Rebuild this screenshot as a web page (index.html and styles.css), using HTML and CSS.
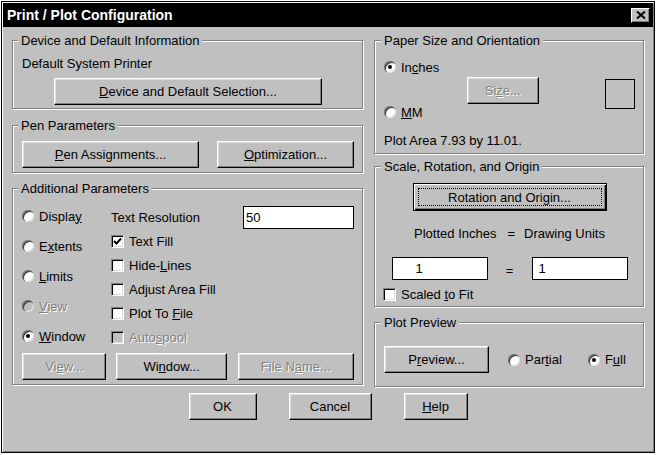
FILE: index.html
```html
<!DOCTYPE html>
<html lang="en">
<head>
  <meta charset="UTF-8">
  <title>Print / Plot Configuration</title>
  <link rel="stylesheet" href="styles.css">
</head>
<body>
  <div class="window">
    <div class="titlebar">
      <span class="title">Print / Plot Configuration</span>
      <span class="close">
        <svg width="10" height="8" viewBox="0 0 10 8"><path d="M1 0.5 L9 7.5 M9 0.5 L1 7.5" stroke="#000" stroke-width="2" fill="none"/></svg>
      </span>
    </div>

    <div class="main">
      <!-- left column -->
      <div class="col col-left">
        <div class="group device">
          <div class="group-title">Device and Default Information</div>
          <div class="printer">Default System Printer</div>
          <button class="btn btn-device"><span><u>D</u>evice and Default Selection...</span></button>
        </div>

        <div class="group pen">
          <div class="group-title">Pen Parameters</div>
          <div class="pen-row">
            <button class="btn btn-pen"><span><u>P</u>en Assignments...</span></button>
            <button class="btn btn-opt"><span><u>O</u>ptimization...</span></button>
          </div>
        </div>

        <div class="group additional">
          <div class="group-title">Additional Parameters</div>
          <div class="mid">
            <div class="radio-col">
              <label class="opt"><span class="radio"></span><span>Displa<u>y</u></span></label>
              <label class="opt"><span class="radio"></span><span>E<u>x</u>tents</span></label>
              <label class="opt"><span class="radio"></span><span><u>L</u>imits</span></label>
              <label class="opt disabled"><span class="radio off"></span><span><u>V</u>iew</span></label>
              <label class="opt"><span class="radio checked"></span><span><u>W</u>indow</span></label>
            </div>
            <div class="opt-col">
              <div class="res-row">
                <span class="res-label">Text Resolution</span>
                <span class="field field-res">50</span>
              </div>
              <label class="check-row"><span class="check"><svg width="9" height="9" viewBox="0 0 9 9"><path d="M1 4 L3.5 6.5 L8 1.5" stroke="#000" stroke-width="2" fill="none"/></svg></span><span>Text Fill</span></label>
              <label class="check-row"><span class="check"></span><span>Hide-<u>L</u>ines</span></label>
              <label class="check-row"><span class="check"></span><span>Ad<u>j</u>ust Area Fill</span></label>
              <label class="check-row"><span class="check"></span><span>Plot To <u>F</u>ile</span></label>
              <label class="check-row disabled"><span class="check off"></span><span>Auto<u>s</u>pool</span></label>
            </div>
          </div>
          <div class="btn-row">
            <button class="btn btn-view disabled"><span>Vi<u>e</u>w...</span></button>
            <button class="btn btn-window"><span>Wi<u>n</u>dow...</span></button>
            <button class="btn btn-file disabled"><span>File N<u>a</u>me...</span></button>
          </div>
        </div>
      </div>

      <!-- right column -->
      <div class="col col-right">
        <div class="group paper">
          <div class="group-title">Paper Size and Orientation</div>
          <div class="paper-row">
            <div class="paper-radios">
              <label class="opt"><span class="radio checked"></span><span>In<u>c</u>hes</span></label>
              <label class="opt"><span class="radio"></span><span><u>M</u>M</span></label>
            </div>
            <button class="btn btn-size disabled"><span>Si<u>z</u>e...</span></button>
            <span class="paper-square"></span>
          </div>
          <div class="plot-area">Plot Area 7.93 by 11.01.</div>
        </div>

        <div class="group scale">
          <div class="group-title">Scale, Rotation, and Origin</div>
          <button class="btn btn-default btn-rotation"><span>Rotation and Ori<u>g</u>in...</span></button>
          <div class="units-row">
            <span>Plotted Inches</span>
            <span class="units-eq">=</span>
            <span>Drawing Units</span>
          </div>
          <div class="fields-row">
            <span class="field field-scale field-plotted">1</span>
            <span class="eq">=</span>
            <span class="field field-scale">1</span>
          </div>
          <label class="check-row fit-row"><span class="check"></span><span>Scaled <u>t</u>o Fit</span></label>
        </div>

        <div class="group preview">
          <div class="group-title">Plot Preview</div>
          <div class="preview-row">
            <button class="btn btn-preview"><span>P<u>r</u>eview...</span></button>
            <label class="opt opt-partial"><span class="radio"></span><span>Par<u>t</u>ial</span></label>
            <label class="opt opt-full"><span class="radio checked"></span><span>F<u>u</u>ll</span></label>
          </div>
        </div>
      </div>
    </div>

    <div class="footer">
      <button class="btn btn-ok">OK</button>
      <button class="btn btn-cancel">Cancel</button>
      <button class="btn btn-help"><span><u>H</u>elp</span></button>
    </div>
  </div>
</body>
</html>
```

FILE: styles.css
```css
* {
  box-sizing: border-box;
}
body {
  margin: 0;
  background: #fff;
  font-family: "Liberation Sans", Arial, sans-serif;
  font-size: 13px;
  line-height: 15px;
  color: #000;
}
.window {
  width: 654px;
  height: 452px;
  margin: 1px 0 0 1px;
  padding: 1px;
  border: 1px solid #000;
  background: #c0c0c0;
  box-shadow: inset 1px 1px 0 #fff, inset -1px -1px 0 #808080;
}
.titlebar {
  height: 24px;
  background: #000;
  display: flex;
  align-items: center;
  justify-content: space-between;
  padding: 0 3px 0 4px;
}
.title {
  color: #fff;
  font-weight: bold;
  font-size: 14px;
}
.close {
  width: 19px;
  height: 15px;
  display: flex;
  align-items: center;
  justify-content: center;
  background: #c0c0c0;
  border: 1px solid;
  border-color: #fff #000 #000 #fff;
  box-shadow: inset -1px -1px 0 #808080;
}

/* layout */
.main {
  display: flex;
  gap: 11px;
  padding: 13px 0 0 9px;
}
.col-left {
  width: 351px;
}
.col-right {
  width: 270px;
}
.group {
  border: 1px solid #808080;
  box-shadow: 1px 1px 0 #fff, inset 1px 1px 0 #fff;
  padding: 0 8px 3px 8px;
}
.group-title {
  width: fit-content;
  margin: -8px 0 0 -3px;
  padding: 0 3px;
  background: #c0c0c0;
}

/* buttons */
.btn {
  display: flex;
  align-items: center;
  justify-content: center;
  height: 27px;
  padding: 0;
  font: inherit;
  color: #000;
  background: #c0c0c0;
  border: 1px solid;
  border-color: #fff #000 #000 #fff;
  box-shadow: inset -1px -1px 0 #808080, inset 1px 1px 0 #dfdfdf;
}
.btn-default {
  position: relative;
  height: 28px;
  border-color: #000;
  box-shadow: inset 1px 1px 0 #fff, inset -1px -1px 0 #000, inset -2px -2px 0 #808080;
}
.btn-default::after {
  content: "";
  position: absolute;
  top: 4px;
  left: 4px;
  right: 4px;
  bottom: 4px;
  border: 1px dotted #000;
}
.disabled {
  color: #808080;
  text-shadow: 1px 1px 0 #fff;
}

/* radios and checks */
.opt {
  display: flex;
  align-items: center;
  gap: 5px;
  height: 20px;
}
.radio {
  position: relative;
  flex: none;
  width: 12px;
  height: 12px;
  border-radius: 50%;
  background: #fff;
  box-shadow: inset 1px 1px 0 #808080, inset 2px 2px 0 #404040, inset -1px -1px 0 #dfdfdf;
}
.radio.off {
  background: #c0c0c0;
}
.radio.checked::after {
  content: "";
  position: absolute;
  top: 4px;
  left: 4px;
  width: 4px;
  height: 4px;
  border-radius: 50%;
  background: #000;
}
.check-row {
  display: flex;
  align-items: center;
  gap: 5px;
  height: 24px;
}
.check {
  flex: none;
  width: 13px;
  height: 13px;
  display: flex;
  align-items: center;
  justify-content: center;
  background: #fff;
  border: 1px solid;
  border-color: #808080 #fff #fff #808080;
  box-shadow: inset 1px 1px 0 #000, inset -1px -1px 0 #dfdfdf;
}
.check.off {
  background: #c0c0c0;
}
.field {
  display: flex;
  align-items: center;
  height: 23px;
  background: #fff;
  border: 1px solid #000;
  padding-left: 2px;
}

/* device group */
.device .printer {
  margin-top: 8px;
  margin-left: 1px;
}
.btn-device {
  width: 268px;
  margin: 7px 0 0 33px;
}

/* pen group */
.pen {
  margin-top: 16px;
  padding-bottom: 4px;
}
.pen-row {
  display: flex;
  margin-top: 8px;
  padding-left: 1px;
}
.btn-pen {
  width: 177px;
}
.btn-opt {
  width: 137px;
  margin-left: 18px;
}

/* additional group */
.additional {
  margin-top: 15px;
  padding-bottom: 4px;
}
.mid {
  display: flex;
  margin-top: 10px;
  padding-left: 1px;
}
.radio-col {
  width: 91px;
  display: flex;
  flex-direction: column;
  gap: 10px;
}
.res-row {
  display: flex;
  align-items: center;
  height: 23px;
}
.res-label {
  width: 132px;
}
.field-res {
  width: 111px;
}
.btn-row {
  display: flex;
  margin-top: 4px;
  padding-left: 1px;
}
.btn-view {
  width: 85px;
}
.btn-window {
  width: 111px;
  margin-left: 10px;
}
.btn-file {
  width: 117px;
  margin-left: 11px;
}

/* paper group */
.paper {
  padding: 0 8px 5px 9px;
}
.paper-row {
  display: flex;
  margin-top: 9px;
}
.paper-radios {
  width: 83px;
  height: 65px;
  display: flex;
  flex-direction: column;
  justify-content: space-between;
}
.btn-size {
  width: 73px;
  margin-top: 20px;
}
.paper-square {
  width: 30px;
  height: 30px;
  margin: 22px 0 0 66px;
  border: 1px solid #000;
}
.plot-area {
  margin-top: 11px;
}

/* scale group */
.scale {
  margin-top: 12px;
  padding: 0 8px 4px 9px;
  display: flex;
  flex-direction: column;
  align-items: center;
}
.scale .group-title {
  align-self: flex-start;
}
.btn-rotation {
  width: 194px;
  margin-top: 9px;
}
.units-row {
  display: flex;
  margin-top: 15px;
}
.units-eq {
  margin: 0 9px 0 11px;
}
.fields-row {
  display: flex;
  align-items: center;
  margin-top: 16px;
}
.field-scale {
  width: 96px;
  padding-left: 6px;
}
.field-plotted {
  padding-left: 23px;
}
.eq {
  width: 44px;
  text-align: center;
  padding-top: 3px;
}
.fit-row {
  align-self: flex-start;
  height: 15px;
  margin-top: 7px;
  margin-left: -1px;
}

/* preview group */
.preview {
  margin-top: 15px;
  padding: 0 8px 13px 9px;
}
.preview-row {
  display: flex;
  align-items: center;
  margin-top: 16px;
}
.btn-preview {
  width: 105px;
}
.opt-partial {
  margin-left: 19px;
}
.opt-full {
  margin-left: 26px;
}

/* bottom buttons */
.footer {
  display: flex;
  justify-content: center;
  gap: 32px;
  margin-top: 6px;
}
.btn-ok {
  width: 68px;
}
.btn-cancel {
  width: 83px;
}
.btn-help {
  width: 64px;
}
```
